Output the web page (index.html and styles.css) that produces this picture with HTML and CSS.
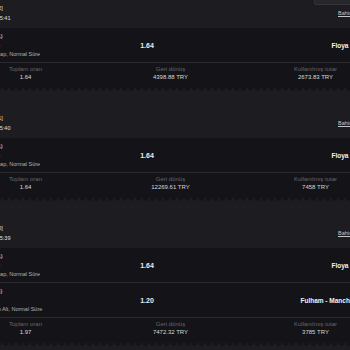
FILE: index.html
```html
<!DOCTYPE html>
<html lang="tr">
<head>
  <meta charset="UTF-8" />
  <meta name="viewport" content="width=device-width, initial-scale=1.0" />
  <title>Bahislerim</title>
  <link rel="stylesheet" href="styles.css">
</head>
<body>
  <div class="top-tab"></div>

  <main class="board">
    <!-- Kupon 1 -->
    <section class="ticket">
      <header class="ticket-head">
        <div class="ticket-id">
          <div>Kupon No: [4832]</div>
          <div>12.05.2024 21:15:41</div>
        </div>
        <a class="ticket-link" href="#">Bahis detayları</a>
      </header>
      <div class="pick">
        <div class="pick-info">
          <div class="pick-name">Ev (0-1)</div>
          <div class="pick-sub">(Floya)</div>
          <div class="pick-market">Handikap, Normal Süre</div>
        </div>
        <div class="pick-odds">1.64</div>
        <div class="pick-event">Floya</div>
      </div>
      <div class="ticket-sum">
        <div class="sum-cell"><span class="sum-label">Toplam oran</span><span class="sum-value">1.64</span></div>
        <div class="sum-cell"><span class="sum-label">Geri dönüş</span><span class="sum-value">4398.88 TRY</span></div>
        <div class="sum-cell"><span class="sum-label">Kullanılmış tutar</span><span class="sum-value">2673.83 TRY</span></div>
      </div>
    </section>

    <!-- Kupon 2 -->
    <section class="ticket">
      <header class="ticket-head">
        <div class="ticket-id">
          <div>Kupon No: [4831]</div>
          <div>12.05.2024 21:15:40</div>
        </div>
        <a class="ticket-link" href="#">Bahis detayları</a>
      </header>
      <div class="pick">
        <div class="pick-info">
          <div class="pick-name">Ev (0-1)</div>
          <div class="pick-sub">(Floya)</div>
          <div class="pick-market">Handikap, Normal Süre</div>
        </div>
        <div class="pick-odds">1.64</div>
        <div class="pick-event">Floya</div>
      </div>
      <div class="ticket-sum">
        <div class="sum-cell"><span class="sum-label">Toplam oran</span><span class="sum-value">1.64</span></div>
        <div class="sum-cell"><span class="sum-label">Geri dönüş</span><span class="sum-value">12269.61 TRY</span></div>
        <div class="sum-cell"><span class="sum-label">Kullanılmış tutar</span><span class="sum-value">7458 TRY</span></div>
      </div>
    </section>

    <!-- Kupon 3 -->
    <section class="ticket">
      <header class="ticket-head">
        <div class="ticket-id">
          <div>Kupon No: [4830]</div>
          <div>12.05.2024 21:15:39</div>
        </div>
        <a class="ticket-link" href="#">Bahis detayları</a>
      </header>
      <div class="pick">
        <div class="pick-info">
          <div class="pick-name">Ev (0-1)</div>
          <div class="pick-sub">(Floya)</div>
          <div class="pick-market">Handikap, Normal Süre</div>
        </div>
        <div class="pick-odds">1.64</div>
        <div class="pick-event">Floya</div>
      </div>
      <div class="pick">
        <div class="pick-info">
          <div class="pick-name">Alt (2.5)</div>
          <div class="pick-sub">Gol</div>
          <div class="pick-market">Toplam Alt, Normal Süre</div>
        </div>
        <div class="pick-odds">1.20</div>
        <div class="pick-event">Fulham - Manchester City</div>
      </div>
      <div class="ticket-sum">
        <div class="sum-cell"><span class="sum-label">Toplam oran</span><span class="sum-value">1.97</span></div>
        <div class="sum-cell"><span class="sum-label">Geri dönüş</span><span class="sum-value">7472.32 TRY</span></div>
        <div class="sum-cell"><span class="sum-label">Kullanılmış tutar</span><span class="sum-value">3785 TRY</span></div>
      </div>
    </section>
  </main>
</body>
</html>
```

FILE: styles.css
```css
html, body {
  margin: 0;
  overflow: hidden;
}
body {
  font-family: 'Liberation Sans', Arial, sans-serif;
  background-color: #1c1c21;
  color: #e6e6e6;
}
.top-tab {
  position: fixed;
  top: -14px;
  left: 314px;
  width: 50px;
  height: 17px;
  background: #26262b;
  border: 1px solid #34343a;
  border-radius: 2px;
}
.board {
  width: 526px;
  margin-top: -18px;
  margin-left: -47px;
}
.ticket {
  margin-bottom: 4px;
}
.ticket-head {
  display: grid;
  grid-template-columns: 378px 1fr;
  align-items: center;
  align-content: end;
  height: 46px;
  box-sizing: border-box;
  padding: 0 0 5px 7px;
  font-size: 5.5px;
  line-height: 10px;
  color: #e0e0e0;
  white-space: nowrap;
}
.ticket-link {
  color: #c4c4c8;
  text-decoration: underline;
}
.pick {
  display: grid;
  grid-template-columns: 110px 108px 278px;
  align-items: center;
  height: 35px;
  box-sizing: border-box;
  padding-left: 30px;
  background: #141418;
  border-bottom: 1px solid #2a2a2f;
}
.pick-info {
  font-size: 5.5px;
  line-height: 9px;
  white-space: nowrap;
}
.pick-name {
  color: #ececec;
}
.pick-sub {
  color: #dcdcdc;
}
.pick-market {
  color: #b0b0b5;
}
.pick-odds {
  text-align: center;
  font-size: 7px;
  font-weight: bold;
  color: #ececec;
}
.pick-event {
  text-align: center;
  font-size: 6.5px;
  font-weight: bold;
  color: #f2f2f2;
  white-space: nowrap;
}
.ticket-sum {
  position: relative;
  display: grid;
  grid-template-columns: repeat(3, 145px);
  height: 25px;
  box-sizing: border-box;
  padding-top: 3px;
  background: #141418;
}
.ticket-sum::after {
  content: "";
  position: absolute;
  left: 0;
  right: 0;
  top: 100%;
  height: 4px;
  background: radial-gradient(circle at 50% 0, #141418 2.4px, transparent 3px) repeat-x;
  background-size: 7px 4px;
}
.sum-cell {
  display: flex;
  flex-direction: column;
  align-items: center;
}
.sum-label {
  font-size: 6px;
  line-height: 7px;
  color: #66666d;
}
.sum-value {
  font-size: 6px;
  line-height: 8px;
  color: #d8d8d8;
}
```
